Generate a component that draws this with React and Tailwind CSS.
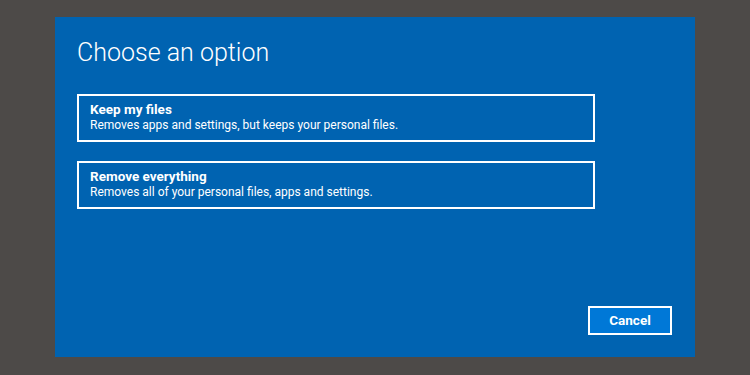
import React from 'react';

const options = [
    { title: 'Keep my files', desc: 'Removes apps and settings, but keeps your personal files.' },
    { title: 'Remove everything', desc: 'Removes all of your personal files, apps and settings.' },
];

const OptionBox = ({ title, desc }) => (
    <button
        type="button"
        className="w-[518px] h-[48px] border-2 border-white text-left text-white pl-[11px] pt-[6px] flex flex-col justify-start"
    >
        <span className="text-[13.5px] leading-[14px] font-bold">{title}</span>
        <span className="text-[12px] leading-[14px] mt-[2px]">{desc}</span>
    </button>
);

export default function App() {
    return (
        <div className="w-[750px] h-[375px] bg-[#4d4a48] pt-[17px] pl-[55px] font-['Roboto',sans-serif]">
            <div className="w-[640px] h-[340px] bg-[#0063b1] flex flex-col pl-[22px] pt-[20px] pr-[23px] pb-[22px]">
                <h1 className="text-[25px] leading-[32px] font-light text-white">Choose an option</h1>

                <div className="flex flex-col gap-[19px] mt-[25px]">
                    {options.map(o => (
                        <OptionBox key={o.title} title={o.title} desc={o.desc} />
                    ))}
                </div>

                <div className="mt-auto flex justify-end">
                    <button
                        type="button"
                        className="w-[84px] h-[29px] bg-[#0078d7] border-2 border-white text-white text-[13.5px] font-bold"
                    >
                        Cancel
                    </button>
                </div>
            </div>
        </div>
    );
}
